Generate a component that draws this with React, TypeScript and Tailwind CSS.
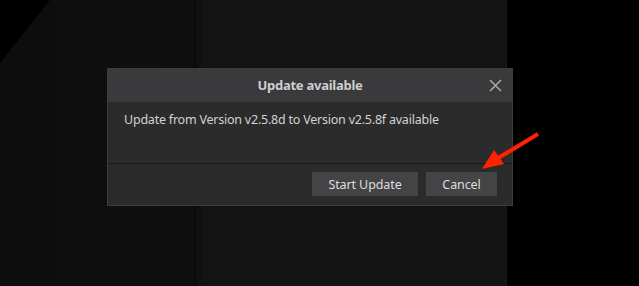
import React from "react";

export default function App() {
  return (
    <div
      className="relative w-[639px] h-[286px] overflow-hidden bg-black"
      style={{ fontFamily: '"Noto Sans", "Open Sans", sans-serif' }}
    >
      {/* background scene */}
      <svg className="absolute inset-0" width="639" height="286" viewBox="0 0 639 286">
        <defs>
          <linearGradient id="g1" x1="0" y1="0" x2="1" y2="0">
            <stop offset="0" stopColor="#0d0d0d" />
            <stop offset="1" stopColor="#121212" />
          </linearGradient>
        </defs>
        <polygon points="50,0 507,0 507,286 0,286 0,63" fill="url(#g1)" />
        <rect x="160" y="0" width="36" height="286" fill="#0e0e0e" />
        <rect x="194" y="0" width="2" height="286" fill="#0a0a0a" />
        <rect x="198" y="0" width="2" height="286" fill="#101010" />
        <rect x="201" y="0" width="306" height="286" fill="#131313" />
        <rect x="506" y="0" width="1" height="286" fill="#1a1a1a" />
      </svg>

      {/* dialog */}
      <div className="absolute left-[107px] top-[68px] w-[406px] h-[138px] flex flex-col bg-[#2b2b2b] border border-[#3d3d3d]">
        <div className="relative h-[33px] bg-[#3a3a3c] flex items-center justify-center">
          <span className="text-[13px] font-bold text-[#cfcfcf] tracking-[-0.25px]">Update available</span>
          <svg className="absolute right-[10px] top-[10px]" width="13" height="13" viewBox="0 0 13 13">
            <path d="M1 1 L12 12 M12 1 L1 12" stroke="#a8a8a8" strokeWidth="1.6" />
          </svg>
        </div>
        <div className="flex-1 px-[16px] pt-[9px] border-b border-[#1a1a1a]">
          <p className="text-[12.5px] text-[#d2d2d2] tracking-[-0.22px]">
            Update from Version v2.5.8d to Version v2.5.8f available
          </p>
        </div>
        <div className="h-[41px] flex items-start justify-end gap-[8px] pr-[15px] pt-[8px]">
          <button className="h-[24px] w-[106px] bg-[#444446] text-[#dedede] text-[12.5px] tracking-[-0.1px] leading-[24px] pt-[1px]">
            Start Update
          </button>
          <button className="h-[24px] w-[71px] bg-[#444446] text-[#dedede] text-[12.5px] tracking-[-0.1px] leading-[24px] pt-[1px]">
            Cancel
          </button>
        </div>
      </div>

      {/* red annotation arrow */}
      <svg className="absolute inset-0 pointer-events-none" width="639" height="286" viewBox="0 0 639 286">
        <line x1="538" y1="134" x2="495" y2="160" stroke="#ff2200" strokeWidth="4" />
        <polygon points="482,169 494,150 504,164" fill="#ff2200" />
      </svg>
    </div>
  );
}
